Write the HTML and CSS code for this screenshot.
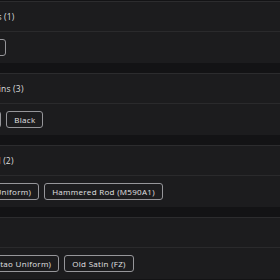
FILE: index.html
```html
<!DOCTYPE html>
<html>
<head>
<meta charset="utf-8">
<link rel="stylesheet" href="styles.css">
</head>
<body>
<div class="page">
  <section class="group">
    <div class="group-head">Slide Cerakote Colorways (1)</div>
    <div class="chips"><span class="chip">Matte Black QPQ Finish</span></div>
  </section>
  <section class="group">
    <div class="group-head">Stock, Grips &amp; Forend Skins (3)</div>
    <div class="chips"><span class="chip">Coyote</span><span class="chip">OD Green</span><span class="chip">Black</span></div>
  </section>
  <section class="group">
    <div class="group-head">Trigger Pins &amp; Bolts Steel (2)</div>
    <div class="chips"><span class="chip">Stealth Green (Marine Uniform)</span><span class="chip">Hammered Rod (M590A1)</span></div>
  </section>
  <section class="group">
    <div class="group-head">Optics (2)</div>
    <div class="chips"><span class="chip">Desert Sand Earth (Capitao Uniform)</span><span class="chip">Old Satin (FZ)</span></div>
  </section>
</div>
</body>
</html>
```
FILE: styles.css
```css
html, body {
  margin: 0;
  padding: 0;
  background: #131315;
}
body {
  width: 280px;
  height: 280px;
  overflow: hidden;
  font-family: "Open Sans", "Liberation Sans", sans-serif;
  color: #d6d6d8;
}
.page {
  margin-left: -115px;
  width: 600px;
  padding-top: 1px;
  display: flex;
  flex-direction: column;
  gap: 10px;
}
.group {
  background: #1c1c1e;
  border-top: 1px solid #2c2c2e;
  height: 61px;
  display: flex;
  flex-direction: column;
}
.group-head {
  height: 30px;
  box-sizing: border-box;
  border-bottom: 1px solid #2a2a2c;
  padding-left: 12px;
  display: flex;
  align-items: center;
  font-size: 8.5px;
  letter-spacing: 0.2px;
  font-weight: 500;
  color: #dcdcde;
}
.chips {
  display: flex;
  gap: 5px;
  padding: 7px 12px;
}
.chip {
  height: 17px;
  box-sizing: border-box;
  border: 1px solid #96969a;
  border-radius: 3px;
  padding: 0 7px;
  display: flex;
  align-items: center;
  font-size: 8px;
  letter-spacing: 0.3px;
  color: #e2e2e4;
  white-space: nowrap;
}
```
